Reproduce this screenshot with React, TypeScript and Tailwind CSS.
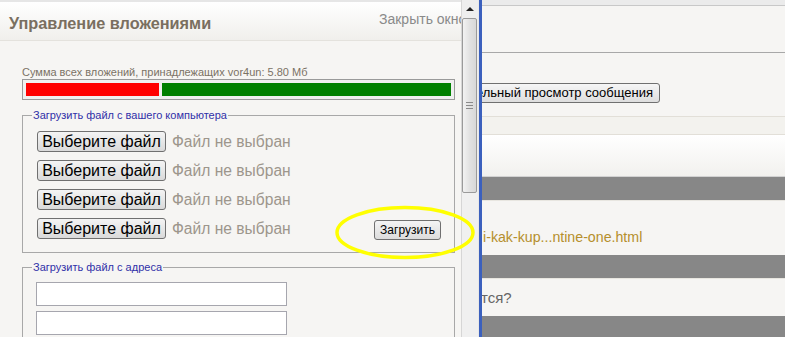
import React from "react";

function FileRow({ withUpload }: { withUpload?: boolean }) {
  return (
    <div className="flex items-center h-[21px] ml-[5px]">
      <button className="h-[21px] w-[129px] border border-[#707070] rounded-[3px] bg-gradient-to-b from-[#f4f4f4] to-[#dadada] text-[16px] leading-[19px] text-black flex items-center justify-center">
        Выберите файл
      </button>
      <span className="ml-[6px] text-[15.6px] leading-[19px] text-[#9d968c]">Файл не выбран</span>
      {withUpload && (
        <button className="ml-auto mr-[13px] mt-[3px] h-[20px] w-[67px] border border-[#707070] rounded-[3px] bg-gradient-to-b from-[#f4f4f4] to-[#dcdcdc] text-[12px] leading-[16px] text-black flex items-center justify-center">
          Загрузить
        </button>
      )}
    </div>
  );
}

export default function App() {
  return (
    <div className="relative flex w-[785px] h-[337px] overflow-hidden bg-[#f6f5f3] font-['Liberation_Sans',Arial,sans-serif]">
      {/* Left dialog */}
      <div className="w-[461px] shrink-0 flex flex-col">
        <div className="h-[41px] shrink-0 flex items-start justify-between pl-[9px] border-t-[2px] border-t-[#e6e6e6] border-b border-b-[#e4e2dd] bg-gradient-to-b from-[#ffffff] to-[#f0efec]">
          <span className="mt-[11px] text-[16.3px] leading-[20px] font-bold text-[#7a6f60]">Управление вложениями</span>
          <span className="mt-[9px] text-[14px] leading-[17px] text-[#8a8a8a] whitespace-nowrap w-[82px] overflow-hidden">Закрыть окно</span>
        </div>
        <div className="flex-1 pt-[25px] pl-[22px] pr-[6px]">
          <div className="text-[11px] leading-[13px] text-[#7b7265]">Сумма всех вложений, принадлежащих vor4un: 5.80 Мб</div>
          <div className="w-[433px] h-[21px] border border-[#9a9a9a] p-[3px] flex gap-[3px] bg-[#f0f0f0]">
            <div className="w-[133px] h-full bg-[#ff0000]" />
            <div className="flex-1 h-full bg-[#008000]" />
          </div>
          <fieldset className="mt-[9px] w-[433px] border border-[#a8a8a8] pl-[9px] pb-[13px]">
            <legend className="px-[1px] text-[11px] leading-[13px] text-[#3030a8]">Загрузить файл с вашего компьютера</legend>
            <div className="mt-[9px] flex flex-col gap-[8px]">
              <FileRow />
              <FileRow />
              <FileRow />
              <FileRow withUpload />
            </div>
          </fieldset>
          <fieldset className="mt-[8px] w-[433px] h-[90px] border border-[#a8a8a8] pl-[9px]">
            <legend className="px-[1px] text-[11px] leading-[13px] text-[#3030a8]">Загрузить файл с адреса</legend>
            <div className="mt-[8px] ml-[4px] flex flex-col gap-[5px]">
              <div className="w-[251px] h-[24px] border border-[#a6a6ae] bg-white" />
              <div className="w-[251px] h-[24px] border border-[#a6a6ae] bg-white" />
            </div>
          </fieldset>
        </div>
      </div>

      {/* Scrollbar */}
      <div className="w-[17px] shrink-0 border-l border-[#d6d6d6] bg-[#eeeeee] flex flex-col">
        <div className="h-[18px] flex items-center justify-center">
          <div className="w-0 h-0 border-l-[4px] border-r-[4px] border-b-[4px] border-l-transparent border-r-transparent border-b-[#222]" />
        </div>
        <div className="h-[175px] w-[15px] border border-[#9a9a9a] rounded-[2px] bg-gradient-to-r from-[#f2f2f2] via-[#e2e2e2] to-[#d8d8d8] flex items-center justify-center">
          <div className="flex flex-col gap-[2px]">
            <div className="w-[7px] h-[1px] bg-[#8a8a8a]" />
            <div className="w-[7px] h-[1px] bg-[#8a8a8a]" />
            <div className="w-[7px] h-[1px] bg-[#8a8a8a]" />
          </div>
        </div>
        <div className="flex-1 bg-[#f0f0f0]" />
      </div>
      <div className="w-[1px] shrink-0 bg-[#e8e8e8]" />
      <div className="w-[3px] shrink-0 bg-[#3b60bd]" />

      {/* Right page */}
      <div className="flex-1 flex flex-col overflow-hidden">
        <div className="h-[6px] shrink-0 bg-[#ebebeb] border-b border-[#c8c8c8]" />
        <div className="h-[47px] shrink-0 border-b border-[#a8a8a8]" />
        <div className="h-[63px] shrink-0 pt-[30px]">
          <div className="w-[178px] overflow-hidden flex justify-end">
            <button className="shrink-0 h-[20px] px-[6px] border border-[#707070] rounded-[3px] bg-gradient-to-b from-[#f6f6f6] to-[#dedede] text-[13px] leading-[16px] text-black whitespace-nowrap">
              Предварительный просмотр сообщения
            </button>
          </div>
        </div>
        <div className="h-[19px] shrink-0 border-t border-b border-[#e2dfd8] bg-[#f3f2ee]" />
        <div className="h-[41px] shrink-0 bg-gradient-to-b from-[#ffffff] to-[#f2f1ee]" />
        <div className="h-[25px] shrink-0 border-t border-[#d2d2d2] border-b border-b-[#e8e6e0] bg-[#878787]" />
        <div className="h-[54px] shrink-0 flex items-center">
          <span className="ml-[1px] mt-[18px] text-[14.2px] leading-[18px] text-[#b58f2c] whitespace-nowrap">i-kak-kup...ntine-one.html</span>
        </div>
        <div className="h-[24px] shrink-0 border-b border-[#e8e6e0] bg-[#878787]" />
        <div className="h-[37px] shrink-0 flex items-center">
          <span className="-ml-[1px] text-[15px] leading-[18px] text-[#666666] whitespace-nowrap">тся?</span>
        </div>
        <div className="flex-1 bg-[#878787]" />
      </div>

      {/* Yellow annotation ellipse */}
      <svg className="absolute left-0 top-0 pointer-events-none" width="785" height="337">
        <ellipse cx="405" cy="232.5" rx="68" ry="25" fill="none" stroke="#ffff00" strokeWidth="3.5" />
      </svg>
    </div>
  );
}
